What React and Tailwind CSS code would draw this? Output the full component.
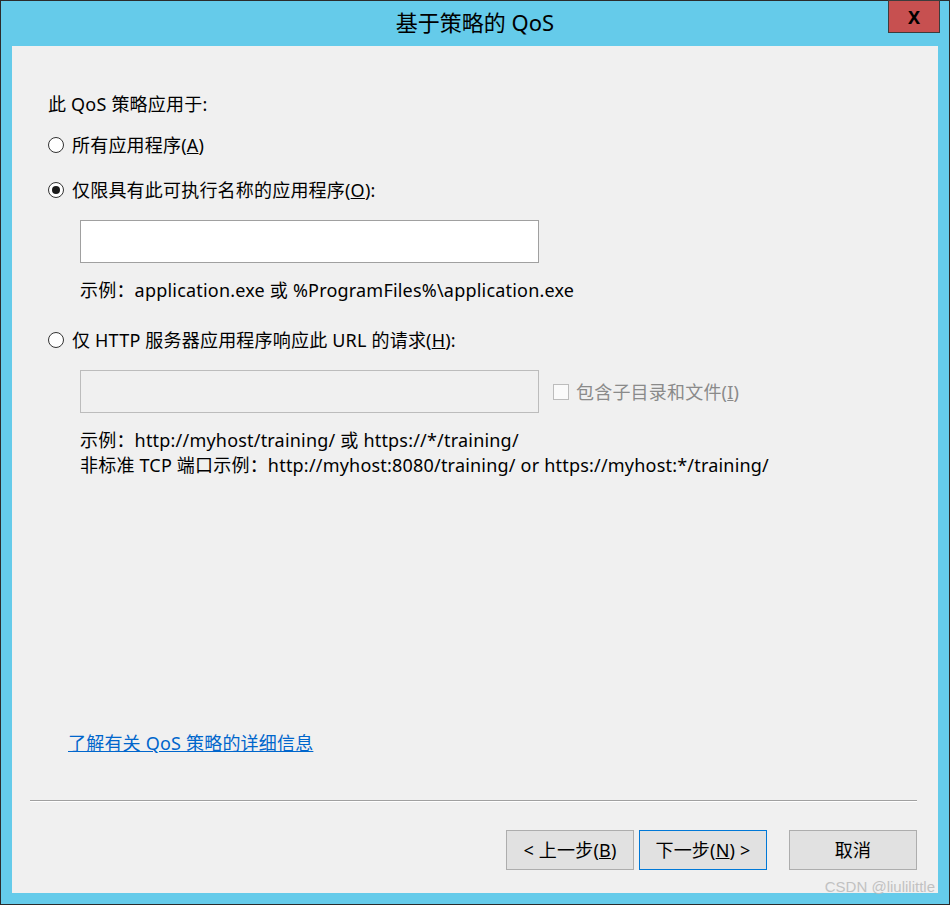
const font = { fontFamily: '"Noto Sans", "Noto Sans CJK SC", sans-serif' };

function Radio({ checked }) {
  return (
    <span className="w-[16px] h-[16px] rounded-full border border-[#333] bg-white flex items-center justify-center shrink-0">
      {checked && <span className="w-[8px] h-[8px] rounded-full bg-[#1a1a1a]" />}
    </span>
  );
}

function Button({ children, primary }) {
  return (
    <button
      className={
        "w-[128px] h-[40px] bg-[#e1e1e1] text-[18px] text-black border " +
        (primary ? "border-[#0078d7]" : "border-[#adadad]")
      }
    >
      {children}
    </button>
  );
}

export default function App() {
  return (
    <div
      className="relative w-[950px] h-[905px] bg-[#65cbea] border border-[#2b2b2b] flex flex-col"
      style={font}
    >
      {/* title bar */}
      <div className="relative h-[45px] shrink-0 flex items-center justify-center">
        <span className="text-[22px] text-black mt-[-2px]">基于策略的 QoS</span>
        <div className="absolute top-[-1px] right-[9px] w-[52px] h-[33px] bg-[#c75050] border border-[#3c3c3c] flex items-center justify-center">
          <span className="text-[18px] font-bold text-black leading-none">X</span>
        </div>
      </div>

      <div className="flex-1 mx-[11px] mb-[11px] bg-[#f0f0f0] flex flex-col text-[18px] text-black tracking-[0.2px]">
        <div className="pl-[36px] pt-[48px] flex flex-col">
          <div className="h-[20px] leading-[20px]">此 QoS 策略应用于:</div>

          <div className="mt-[21px] h-[20px] flex items-center gap-[8px]">
            <Radio />
            <span className="leading-[20px]">所有应用程序(<u>A</u>)</span>
          </div>

          <div className="mt-[25px] h-[20px] flex items-center gap-[8px]">
            <Radio checked />
            <span className="leading-[20px]">仅限具有此可执行名称的应用程序(<u>O</u>):</span>
          </div>

          <div className="pl-[32px] flex flex-col">
            <div className="mt-[20px] w-[459px] h-[43px] bg-white border border-[#a0a0a0]" />
            <div className="mt-[17px] h-[20px] leading-[20px] whitespace-nowrap">
              示例：application.exe 或 %ProgramFiles%\application.exe
            </div>
          </div>

          <div className="mt-[30px] h-[20px] flex items-center gap-[8px]">
            <Radio />
            <span className="leading-[20px]">仅 HTTP 服务器应用程序响应此 URL 的请求(<u>H</u>):</span>
          </div>

          <div className="pl-[32px] flex flex-col">
            <div className="mt-[20px] flex items-center">
              <div className="w-[459px] h-[43px] bg-[#f0f0f0] border border-[#bcbcbc]" />
              <div className="ml-[14px] flex items-center gap-[7px] text-[#8a8a8a]">
                <span className="w-[16px] h-[16px] border border-[#bcbcbc] bg-[#fafafa]" />
                <span className="leading-[20px]">包含子目录和文件(<u>I</u>)</span>
              </div>
            </div>
            <div className="mt-[15px] flex flex-col leading-[25px] whitespace-nowrap">
              <span>示例：http://myhost/training/ 或 https://*/training/</span>
              <span>非标准 TCP 端口示例：http://myhost:8080/training/ or https://myhost:*/training/</span>
            </div>
          </div>
        </div>

        <div className="flex-1" />

        <div className="pl-[56px] h-[20px] leading-[20px]">
          <span className="text-[#0066cc] underline">了解有关 QoS 策略的详细信息</span>
        </div>

        <div className="mt-[47px] ml-[18px] mr-[21px] h-[2px] bg-[#a0a0a0] border-b border-white" />

        <div className="mt-[28px] mr-[21px] mb-[23px] flex justify-end">
          <Button>&lt; 上一步(<u>B</u>)</Button>
          <div className="ml-[5px]">
            <Button primary>下一步(<u>N</u>) &gt;</Button>
          </div>
          <div className="ml-[22px]">
            <Button>取消</Button>
          </div>
        </div>
      </div>

      <span className="absolute right-[14px] bottom-[6px] text-[15px] text-[#bdbdbd] opacity-90" style={{ fontFamily: '"Liberation Sans", sans-serif' }}>
        CSDN @liulilittle
      </span>
    </div>
  );
}
